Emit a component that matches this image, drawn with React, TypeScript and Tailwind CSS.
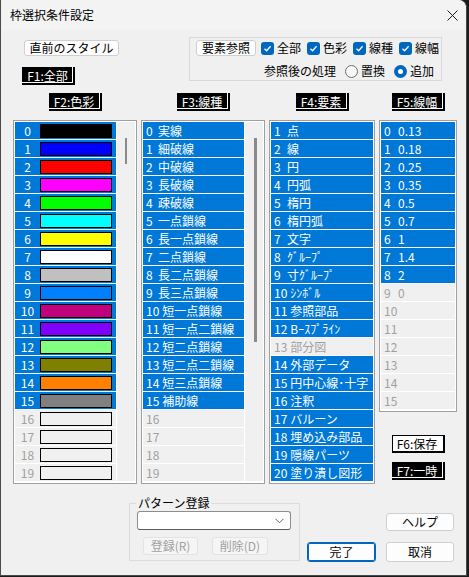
import React from "react";

const colors = [
  "bg-[#000000]",
  "bg-[#0000ff]",
  "bg-[#ff0000]",
  "bg-[#ff00ff]",
  "bg-[#00ff00]",
  "bg-[#00ffff]",
  "bg-[#ffff00]",
  "bg-[#ffffff]",
  "bg-[#c0c0c0]",
  "bg-[#0080ff]",
  "bg-[#c0007f]",
  "bg-[#8000ff]",
  "bg-[#80ff80]",
  "bg-[#808000]",
  "bg-[#ff8000]",
  "bg-[#808080]",
  "bg-[#f0f0f0]",
  "bg-[#f0f0f0]",
  "bg-[#f0f0f0]",
  "bg-[#f0f0f0]",
];

const lineTypes = [
  "実線",
  "細破線",
  "中破線",
  "長破線",
  "疎破線",
  "一点鎖線",
  "長一点鎖線",
  "二点鎖線",
  "長二点鎖線",
  "長三点鎖線",
  "短一点鎖線",
  "短一点二鎖線",
  "短二点鎖線",
  "短二点二鎖線",
  "短三点鎖線",
  "補助線",
  "",
  "",
  "",
  "",
];

const elements = [
  "点",
  "線",
  "円",
  "円弧",
  "楕円",
  "楕円弧",
  "文字",
  "ｸﾞﾙｰﾌﾟ",
  "寸ｸﾞﾙｰﾌﾟ",
  "ｼﾝﾎﾞﾙ",
  "参照部品",
  "Bｰｽﾌﾟﾗｲﾝ",
  "部分図",
  "外部データ",
  "円中心線･十字",
  "注釈",
  "バルーン",
  "埋め込み部品",
  "隠線パーツ",
  "塗り潰し図形",
];

const widths = ["0.13", "0.18", "0.25", "0.35", "0.5", "0.7", "1", "1.4", "2", "0", "", "", "", "", "", ""];

function FKey({ label, light }: { label: string; light?: boolean }) {
  if (light) {
    return (
      <div className="w-[53px] h-[18px] bg-white border border-black shadow-[inset_-1px_-1px_0_#000] text-[12px] leading-[16px] text-black text-center pr-[2px] whitespace-nowrap">
        {label}
      </div>
    );
  }
  return (
    <div className="w-[53px] h-[18px] bg-black text-white text-[12px] leading-[17px] text-center pr-[2px] whitespace-nowrap shadow-[inset_-2px_-2px_0_#000,inset_-3px_-3px_0_#fff]">
      {label}
    </div>
  );
}

function Row({ active, children }: { active: boolean; children: React.ReactNode }) {
  return (
    <div
      className={`h-[17px] mb-px flex items-center text-[12px] leading-[17px] whitespace-nowrap ${
        active ? "bg-[#0078d7] text-white" : "bg-[#f0f0f0] text-[#a0a0a0]"
      }`}
    >
      {children}
    </div>
  );
}

function Check({ label }: { label: string }) {
  return (
    <div className="flex items-center gap-[3px] shrink-0">
      <span className="w-[13px] h-[13px] shrink-0 rounded-[3px] bg-[#0067c0] flex items-center justify-center">
        <svg width="9" height="9" viewBox="0 0 9 9" fill="none">
          <path d="M1.5 4.8 L3.6 6.8 L7.6 2.3" stroke="#fff" strokeWidth="1.3" />
        </svg>
      </span>
      <span className="text-[12px] leading-none whitespace-nowrap">{label}</span>
    </div>
  );
}

function Radio({ label, checked }: { label: string; checked?: boolean }) {
  return (
    <div className="flex items-center gap-[3px] shrink-0">
      {checked ? (
        <span className="w-[13px] h-[13px] shrink-0 rounded-full bg-[#0067c0] flex items-center justify-center">
          <span className="w-[5px] h-[5px] rounded-full bg-white" />
        </span>
      ) : (
        <span className="w-[13px] h-[13px] shrink-0 rounded-full border border-[#6f6f6f] bg-[#f7f7f7]" />
      )}
      <span className="text-[12px] leading-none whitespace-nowrap">{label}</span>
    </div>
  );
}

function Btn({ children, className }: { children: React.ReactNode; className: string }) {
  return (
    <div
      className={`bg-[#fdfdfd] border border-[#cfcfcf] rounded-[3px] text-[12px] text-black flex items-center justify-center whitespace-nowrap shrink-0 ${className}`}
    >
      {children}
    </div>
  );
}

export default function App() {
  return (
    <div className="w-[469px] h-[577px] bg-[#1c1c1c] font-['Noto_Sans_CJK_JP',sans-serif] text-black">
      <div className="w-[467px] h-[576px] bg-[#f0f0f0] border-l border-r border-b border-[#4a4a4a] rounded-tr-[8px] flex flex-col">
        {/* title */}
        <div className="h-[30px] shrink-0 bg-[#f3f3f3] flex items-center justify-between pl-[9px] pr-[8px] rounded-tr-[8px]">
          <span className="text-[12px]">枠選択条件設定</span>
          <svg width="11" height="11" viewBox="0 0 11 11">
            <path d="M0.5 0.5 L10.5 10.5 M10.5 0.5 L0.5 10.5" stroke="#1a1a1a" strokeWidth="1" />
          </svg>
        </div>

        {/* top row */}
        <div className="flex h-[47px] mt-[7px] shrink-0">
          <div className="w-[188px] shrink-0 pl-[21px] flex flex-col items-start">
            <Btn className="ml-[2px] mt-[3px] w-[95px] h-[16px] rounded-[2px]">直前のスタイル</Btn>
            <div className="mt-[11px]">
              <FKey label="F1:全部" />
            </div>
          </div>
          <div className="w-[253px] h-[44px] shrink-0 border border-[#d9d9d9] flex flex-col">
            <div className="flex items-center ml-[6px] mt-[2px] h-[16px]">
              <Btn className="w-[60px] h-[16px] rounded-[2px]">要素参照</Btn>
              <div className="flex items-center gap-[6px] ml-[5px]">
                <Check label="全部" />
                <Check label="色彩" />
                <Check label="線種" />
                <Check label="線幅" />
              </div>
            </div>
            <div className="flex items-center justify-end gap-[9px] pr-[7px] mt-[7px] h-[16px]">
              <span className="text-[12px] leading-none whitespace-nowrap">参照後の処理</span>
              <Radio label="置換" />
              <Radio label="追加" checked />
            </div>
          </div>
        </div>

        {/* columns */}
        <div className="flex items-start gap-[4px] pl-[12px] mt-[9px] shrink-0">
          {/* colours */}
          <div className="w-[124px] flex flex-col items-center">
            <FKey label="F2:色彩" />
            <div className="mt-[9px] w-[124px] border border-[#a0a0a0] bg-white p-px flex">
              <div className="w-[101px]">
                {colors.map((c, i) => (
                  <Row key={i} active={i < 16}>
                    <span className="w-[25px] text-center">{i}</span>
                    <span className={`w-[72px] h-[14px] border border-black ${c}`} />
                  </Row>
                ))}
              </div>
              <div className="ml-px w-[18px] bg-[#f0f0f0] mb-px">
                <div className="ml-[8px] mt-[16px] w-[2px] h-[26px] bg-[#8a8a8a]" />
              </div>
            </div>
          </div>

          {/* line types */}
          <div className="w-[124px] flex flex-col items-center">
            <FKey label="F3:線種" />
            <div className="mt-[9px] w-[124px] border border-[#a0a0a0] bg-white p-px flex">
              <div className="w-[101px]">
                {lineTypes.map((t, i) => (
                  <Row key={i} active={i < 16}>
                    <span className="ml-[3px] min-w-[9px]">{i}</span>
                    <span className="ml-[3px]">{t}</span>
                  </Row>
                ))}
              </div>
              <div className="ml-px w-[18px] bg-[#f0f0f0] mb-px">
                <div className="ml-[9px] mt-[16px] w-[3px] h-[204px] bg-[#8a8a8a]" />
              </div>
            </div>
          </div>

          {/* elements */}
          <div className="w-[106px] flex flex-col items-center">
            <FKey label="F4:要素" />
            <div className="mt-[9px] w-[106px] border border-[#a0a0a0] bg-white p-px">
              {elements.map((t, i) => (
                <Row key={i} active={i !== 12}>
                  <span className="ml-[3px] min-w-[10px]">{i + 1}</span>
                  <span className="ml-[3px]">{t}</span>
                </Row>
              ))}
            </div>
          </div>

          {/* widths */}
          <div className="w-[78px] flex flex-col items-center">
            <FKey label="F5:線幅" />
            <div className="mt-[9px] w-[78px] border border-[#a0a0a0] bg-white p-px">
              {widths.map((t, i) => (
                <Row key={i} active={i < 9}>
                  <span className="ml-[3px] min-w-[11px]">{i}</span>
                  <span className="ml-[3px]">{t}</span>
                </Row>
              ))}
            </div>
            <div className="mt-[23px]">
              <FKey label="F6:保存" light />
            </div>
            <div className="mt-[9px]">
              <FKey label="F7:一時" />
            </div>
          </div>
        </div>

        {/* bottom */}
        <div className="flex items-start mt-[12px] pl-[128px]">
          <fieldset className="w-[171px] h-[65px] border border-[#dcdcdc] px-0">
            <legend className="ml-[6px] px-[2px] text-[12px] leading-[14px]">パターン登録</legend>
            <div className="ml-[7px] mt-px w-[154px] h-[19px] bg-white border border-[#8d8d8d] border-b-[#5a5a5a] rounded-[3px] flex items-center justify-end pr-[6px]">
              <svg width="9" height="6" viewBox="0 0 9 6" fill="none">
                <path d="M0.5 0.8 L4.5 4.8 L8.5 0.8" stroke="#5f5f5f" strokeWidth="1" />
              </svg>
            </div>
            <div className="flex ml-[13px] mt-[7px] gap-[14px]">
              <div className="w-[55px] h-[18px] bg-[#f5f5f5] border border-[#e3e3e3] rounded-[3px] text-[12px] text-[#a0a0a0] flex items-center justify-center">
                登録(R)
              </div>
              <div className="w-[56px] h-[18px] bg-[#f5f5f5] border border-[#e3e3e3] rounded-[3px] text-[12px] text-[#a0a0a0] flex items-center justify-center">
                削除(D)
              </div>
            </div>
          </fieldset>
          <div className="ml-[7px] mt-[46px]">
            <div className="w-[69px] h-[20px] bg-[#fdfdfd] border border-[#0067c0] shadow-[inset_0_0_0_1px_#0067c0] rounded-[3px] text-[12px] flex items-center justify-center">
              完了
            </div>
          </div>
          <div className="ml-[10px] mt-[17px] flex flex-col">
            <Btn className="w-[68px] h-[18px]">ヘルプ</Btn>
            <Btn className="w-[68px] h-[20px] mt-[11px]">取消</Btn>
          </div>
        </div>
      </div>
    </div>
  );
}
